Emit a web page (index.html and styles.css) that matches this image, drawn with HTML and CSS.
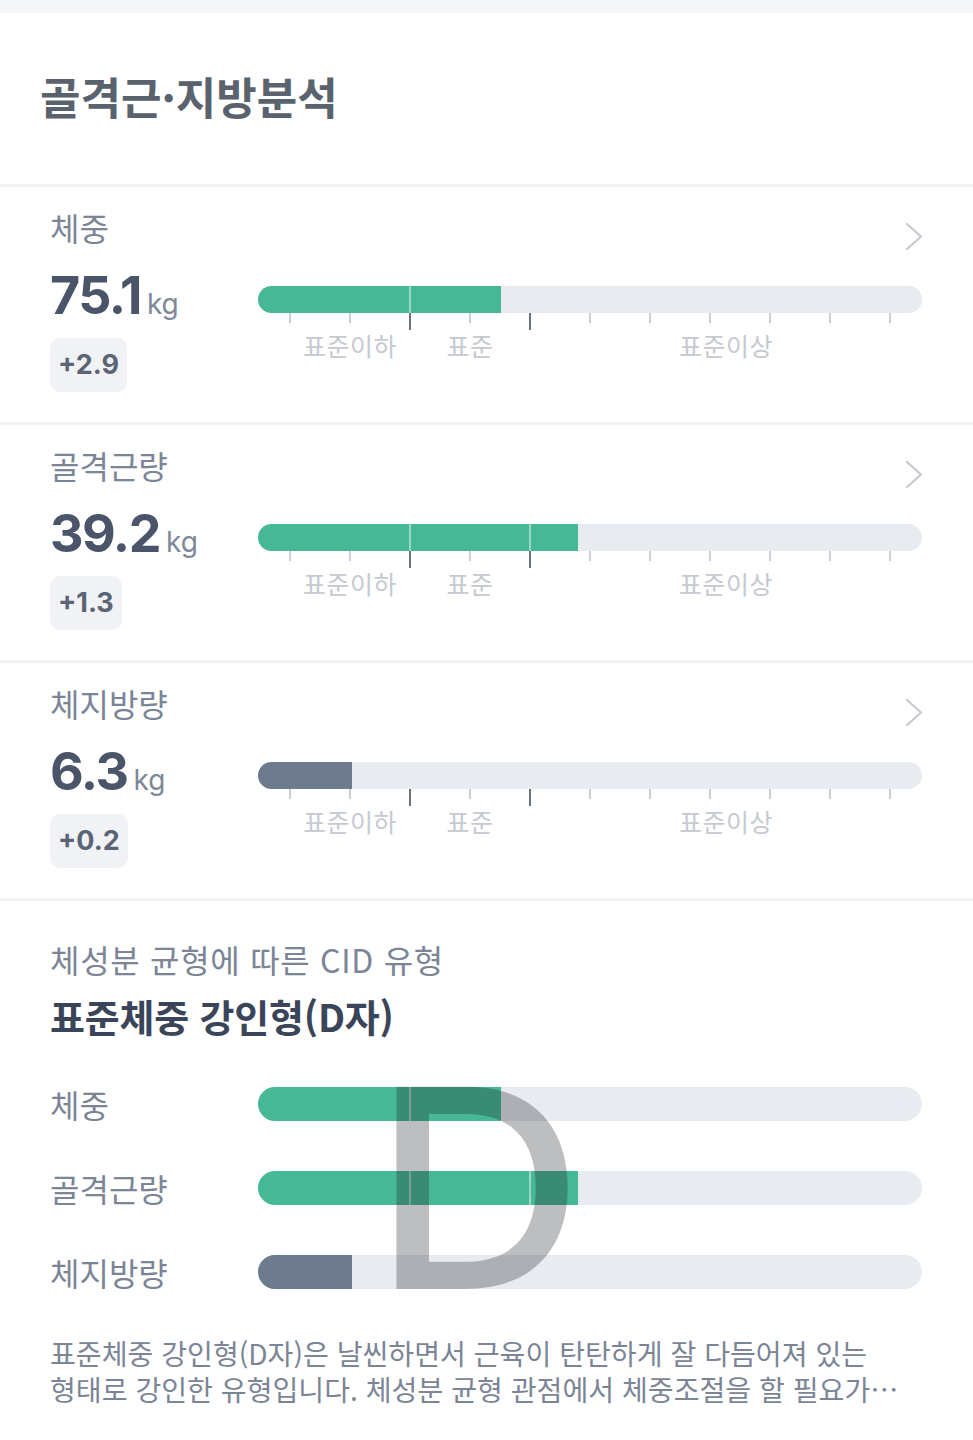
FILE: index.html
```html
<!DOCTYPE html>
<html lang="ko">
<head>
<meta charset="utf-8">
<title>골격근·지방분석</title>
<link rel="stylesheet" href="styles.css">
</head>
<body>
<div class="page">
  <div class="topbar"></div>
  <section class="title-sec"><h1 class="title">골격근·지방분석</h1></section>
  <div class="divider"></div>

  <section class="metric">
    <div class="metric-left">
      <div class="metric-label">체중</div>
      <div class="metric-value"><span class="num">75.1</span><span class="unit">kg</span></div>
      <div class="badge">+2.9</div>
    </div>
    <div class="metric-right">
      <div class="chev-row"><svg class="chev" width="18" height="29" viewBox="0 0 18 29"><path d="M2 2 L16 14.5 L2 27" fill="none" stroke="#c6cad0" stroke-width="2.2" stroke-linecap="round" stroke-linejoin="round"/></svg></div>
      <div class="track"><div class="fill green" style="width:36.6%"><i class="mark m1"></i><i class="mark m2"></i></div></div>
      <div class="ticks"><i></i><i></i><i class="major"></i><i></i><i class="major"></i><i></i><i></i><i></i><i></i><i></i><i></i></div>
      <div class="scale-labels"><span>표준이하</span><span>표준</span><span>표준이상</span></div>
    </div>
  </section>
  <div class="divider"></div>

  <section class="metric">
    <div class="metric-left">
      <div class="metric-label">골격근량</div>
      <div class="metric-value"><span class="num">39.2</span><span class="unit">kg</span></div>
      <div class="badge">+1.3</div>
    </div>
    <div class="metric-right">
      <div class="chev-row"><svg class="chev" width="18" height="29" viewBox="0 0 18 29"><path d="M2 2 L16 14.5 L2 27" fill="none" stroke="#c6cad0" stroke-width="2.2" stroke-linecap="round" stroke-linejoin="round"/></svg></div>
      <div class="track"><div class="fill green" style="width:48.2%"><i class="mark m1"></i><i class="mark m2"></i></div></div>
      <div class="ticks"><i></i><i></i><i class="major"></i><i></i><i class="major"></i><i></i><i></i><i></i><i></i><i></i><i></i></div>
      <div class="scale-labels"><span>표준이하</span><span>표준</span><span>표준이상</span></div>
    </div>
  </section>
  <div class="divider"></div>

  <section class="metric">
    <div class="metric-left">
      <div class="metric-label">체지방량</div>
      <div class="metric-value"><span class="num">6.3</span><span class="unit">kg</span></div>
      <div class="badge">+0.2</div>
    </div>
    <div class="metric-right">
      <div class="chev-row"><svg class="chev" width="18" height="29" viewBox="0 0 18 29"><path d="M2 2 L16 14.5 L2 27" fill="none" stroke="#c6cad0" stroke-width="2.2" stroke-linecap="round" stroke-linejoin="round"/></svg></div>
      <div class="track"><div class="fill slate" style="width:14.16%"><i class="mark m1"></i><i class="mark m2"></i></div></div>
      <div class="ticks"><i></i><i></i><i class="major"></i><i></i><i class="major"></i><i></i><i></i><i></i><i></i><i></i><i></i></div>
      <div class="scale-labels"><span>표준이하</span><span>표준</span><span>표준이상</span></div>
    </div>
  </section>
  <div class="divider"></div>

  <section class="cid">
    <div class="cid-sub">체성분 균형에 따른 CID 유형</div>
    <div class="cid-title">표준체중 강인형(D자)</div>
    <div class="cid-chart">
      <div class="cid-row">
        <div class="cid-label">체중</div>
        <div class="track big"><div class="fill green" style="width:36.6%"><i class="mark m1"></i><i class="mark m2"></i></div></div>
      </div>
      <div class="cid-row">
        <div class="cid-label">골격근량</div>
        <div class="track big"><div class="fill green" style="width:48.2%"><i class="mark m1"></i><i class="mark m2"></i></div></div>
      </div>
      <div class="cid-row">
        <div class="cid-label">체지방량</div>
        <div class="track big"><div class="fill slate" style="width:14.16%"><i class="mark m1"></i><i class="mark m2"></i></div></div>
      </div>
      <div class="cid-letter">D</div>
    </div>
    <p class="cid-desc">표준체중 강인형(D자)은 날씬하면서 근육이 탄탄하게 잘 다듬어져 있는 형태로 강인한 유형입니다. 체성분 균형 관점에서 체중조절을 할 필요가…</p>
  </section>
</div>
</body>
</html>
```

FILE: styles.css
```css
* { box-sizing: border-box; }
html, body { margin: 0; padding: 0; background: #ffffff; }
body { font-family: "Noto Sans CJK KR", "Noto Sans", sans-serif; }

.page { width: 973px; }

.topbar { height: 13px; background: #f5f6f8; }

.title-sec { padding: 53px 40px 58px; }
.title {
  margin: 0;
  font-size: 44px;
  line-height: 60px;
  font-weight: 700;
  letter-spacing: 0;
  color: #5a626e;
}

.divider { height: 3px; background: #f1f2f5; }

.metric {
  display: flex;
  padding: 20px 51px 30px 50px;
}
.metric-left { width: 208px; flex: none; display: flex; flex-direction: column; align-items: flex-start; }
.metric-label {
  font-size: 32px;
  line-height: 40px;
  color: #7b8596;
}
.metric-value {
  margin-top: 19px;
  display: flex;
  align-items: baseline;
  height: 60px;
}
.num {
  font-family: Inter, "Liberation Sans", sans-serif;
  font-weight: 700;
  font-size: 52px;
  line-height: 60px;
  letter-spacing: -1.5px;
  color: #4a5569;
}
.unit {
  font-family: Inter, "Liberation Sans", sans-serif;
  font-size: 28px;
  line-height: 60px;
  margin-left: 6px;
  color: #7e8898;
}
.badge {
  margin-top: 12px;
  height: 54px;
  line-height: 54px;
  padding: 0 8px;
  border-radius: 10px;
  background: #f0f2f5;
  font-family: Inter, "Liberation Sans", sans-serif;
  font-weight: 700;
  font-size: 27px;
  color: #5b6474;
}

.metric-right { flex: 1; min-width: 0; }
.chev-row { height: 44px; display: flex; justify-content: flex-end; align-items: flex-end; }
.chev { display: block; margin-right: -1px; }

.track {
  margin-top: 35px;
  height: 27px;
  border-radius: 14px;
  background: #e8ebf0;
  overflow: hidden;
}
.fill { position: relative; height: 100%; overflow: hidden; }
.fill.green { background: #47b896; }
.fill.slate { background: #6e7b8f; }
.mark { position: absolute; top: 0; bottom: 0; width: 2px; background: rgba(255, 255, 255, 0.45); }
.mark.m1 { left: 151px; }
.mark.m2 { left: 271px; }

.ticks {
  display: flex;
  justify-content: space-between;
  align-items: flex-start;
  padding: 0 31px;
  height: 15px;
}
.ticks i { display: block; width: 2px; height: 10px; background: #ccd0d6; }
.ticks i.major { height: 17px; background: #6b7486; }

.scale-labels {
  display: grid;
  grid-template-columns: 120px 120px 1fr;
  padding-left: 32px;
  font-size: 25px;
  letter-spacing: 0.5px;
  line-height: 34px;
  color: #c5cad1;
  text-align: center;
}

.cid { padding: 38px 51px 40px 50px; }
.cid-sub { font-size: 32px; line-height: 40px; letter-spacing: 0.7px; color: #7b8596; }
.cid-title {
  margin-top: 14px;
  font-size: 38px;
  line-height: 46px;
  font-weight: 700;
  letter-spacing: -0.2px;
  color: #3b4559;
}
.cid-chart {
  position: relative;
  margin-top: 45px;
  display: flex;
  flex-direction: column;
  gap: 44px;
}
.cid-row { display: flex; align-items: center; height: 40px; }
.cid-label { width: 208px; flex: none; font-size: 32px; line-height: 40px; color: #7b8596; }
.track.big { flex: 1; margin-top: 0; height: 34px; border-radius: 17px; }

.cid-letter {
  position: absolute;
  left: 324px;
  top: -35px;
  font-family: Inter, "Liberation Sans", sans-serif;
  font-weight: 500;
  font-size: 278px;
  line-height: 1;
  color: rgba(28, 32, 36, 0.29);
  transform: scaleX(1.05);
  transform-origin: 21px 0;
  pointer-events: none;
}

.cid-desc {
  margin: 43px 0 0;
  font-size: 28.1px;
  line-height: 36px;
  color: #7b8596;
  word-break: keep-all;
}
```
